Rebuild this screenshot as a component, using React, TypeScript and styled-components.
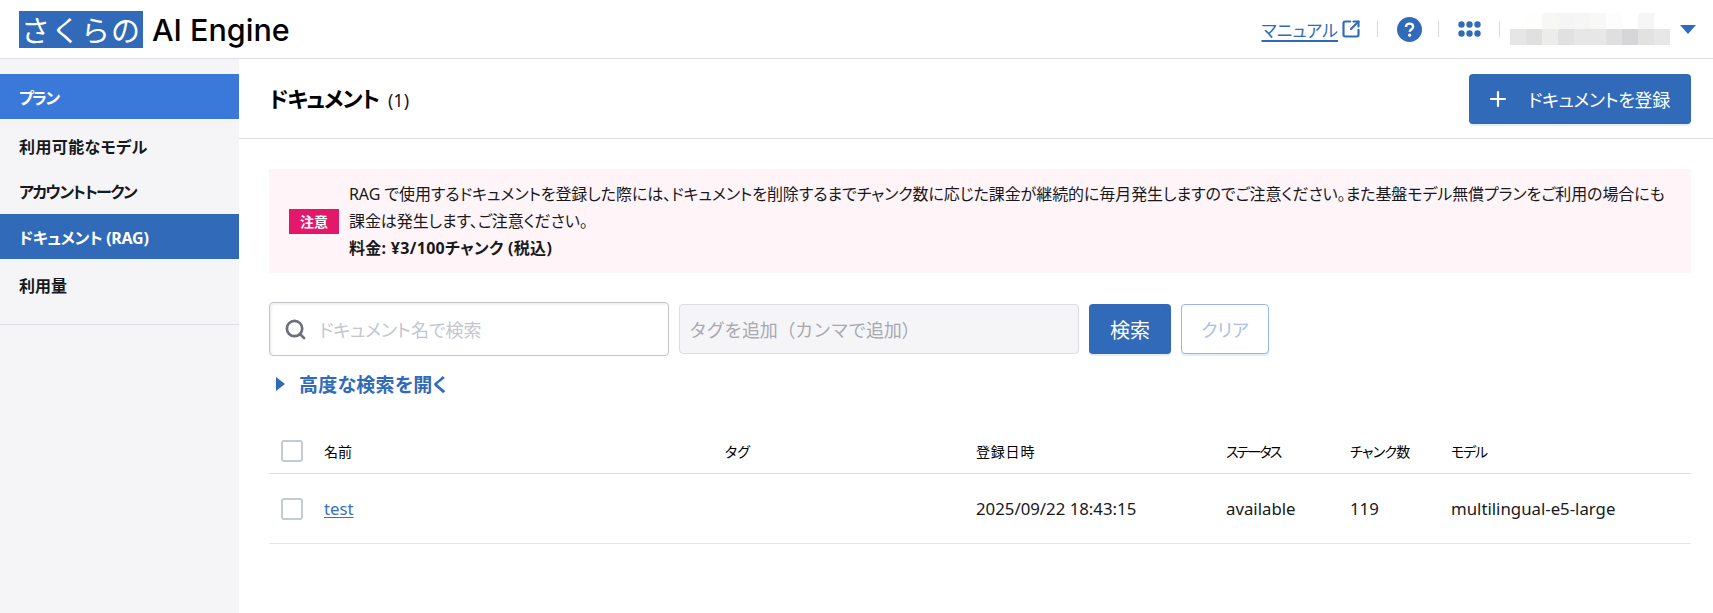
import React from 'react';
import styled, { createGlobalStyle } from 'styled-components';
import { Plus, Search, SquareArrowOutUpRight } from 'lucide-react';

const Global = createGlobalStyle`
  html, body { margin: 0; padding: 0; background: #fff; }
  body {
    font-family: "Noto Sans", "Noto Sans CJK JP", sans-serif;
    font-feature-settings: "palt";
    color: #17191c;
  }
`;

const Page = styled.div`
  width: 1713px;
  height: 613px;
  display: flex;
  flex-direction: column;
  overflow: hidden;
`;

const TopBar = styled.header`
  height: 58px;
  flex: none;
  display: flex;
  align-items: center;
  justify-content: space-between;
  padding: 0 17px 0 19px;
  border-bottom: 1px solid #dfdfe3;
`;

const Logo = styled.div`
  display: flex;
  align-items: center;
  gap: 9px;
`;

const LogoMark = styled.span`
  width: 124px;
  height: 37px;
  display: flex;
  align-items: center;
  justify-content: center;
  background: #316ab9;
  color: #fff;
  font-size: 29px;
  font-weight: 400;
  font-feature-settings: normal;
  letter-spacing: 1px;
  white-space: nowrap;
`;

const LogoText = styled.span`
  font-family: Inter, sans-serif;
  font-size: 30.5px;
  font-weight: 500;
  color: #000;
`;

const TopActions = styled.div`
  display: flex;
  align-items: center;
`;

const ManualLink = styled.a`
  color: #316ab9;
  font-size: 17px;
  text-decoration: underline;
  text-decoration-thickness: 2px;
  text-underline-offset: 3px;
  display: flex;
  align-items: center;
  gap: 3px;
  margin-right: 16px;
  & > svg { color: #316ab9; }
`;

const Divider = styled.span`
  width: 1px;
  height: 16px;
  background: #d9d9de;
`;

const IconSlot = styled.span<{ $w: number; $l: number; $r: number }>`
  width: ${p => p.$w}px;
  margin: 0 ${p => p.$r}px 0 ${p => p.$l}px;
  display: flex;
  align-items: center;
  justify-content: center;
`;

const Blur = styled.div`
  width: 160px;
  height: 32px;
  margin-left: 10px;
  display: grid;
  grid-template-columns: repeat(10, 16px);
  grid-auto-rows: 16px;
`;

const BlurCell = styled.span<{ $c: string }>`
  background: ${p => p.$c};
`;

const Caret = styled.span`
  width: 0;
  height: 0;
  margin: 1px 0 0 10px;
  border-left: 8px solid transparent;
  border-right: 8px solid transparent;
  border-top: 9px solid #316ab9;
`;

const Body = styled.div`
  flex: 1;
  display: flex;
  min-height: 0;
`;

const Side = styled.nav`
  width: 239px;
  flex: none;
  background: #f5f5f8;
  padding-top: 15px;
`;

const SideList = styled.div`
  padding-bottom: 17px;
  border-bottom: 1px solid #dcdce1;
`;

const SideItem = styled.div<{ $bg?: string; $track?: number; $after?: number }>`
  height: 45px;
  margin-bottom: ${p => p.$after || 0}px;
  display: flex;
  align-items: center;
  padding-left: 19px;
  font-size: 16px;
  font-weight: 700;
  letter-spacing: ${p => p.$track || 0}px;
  background: ${p => p.$bg || 'transparent'};
  color: ${p => (p.$bg ? '#fff' : '#17191c')};
`;

const Main = styled.main`
  flex: 1;
  min-width: 0;
`;

const TitleBar = styled.div`
  height: 79px;
  display: flex;
  align-items: center;
  justify-content: space-between;
  padding: 0 22px 0 30px;
  border-bottom: 1px solid #dfdfe3;
`;

const Title = styled.h1`
  margin: 0 0 4px;
  font-size: 22px;
  font-weight: 700;
  letter-spacing: -1.1px;
  color: #000;
  display: flex;
  align-items: baseline;
  gap: 9px;
`;

const Count = styled.span`
  font-size: 18px;
  font-weight: 400;
  letter-spacing: 0;
  color: #17191c;
`;

const Button = styled.button`
  height: 50px;
  border: none;
  border-radius: 4px;
  background: #316ab9;
  color: #fff;
  font: inherit;
  font-feature-settings: inherit;
  font-size: 18px;
  display: flex;
  align-items: center;
  justify-content: center;
  box-shadow: 0 2px 0 #e6edf8;
`;

const AddButton = styled(Button)`
  width: 222px;
  gap: 18px;
  padding: 0 4px 0 0;
  letter-spacing: -0.3px;
`;

const Content = styled.div`
  padding: 30px 22px 0 30px;
`;

const Notice = styled.div`
  height: 104px;
  display: flex;
  align-items: center;
  gap: 10px;
  padding: 0 20px;
  background: #fff4f8;
  box-sizing: border-box;
`;

const NoticeBadge = styled.span`
  flex: none;
  width: 50px;
  height: 25px;
  display: flex;
  align-items: center;
  justify-content: center;
  background: #e3186a;
  color: #fff;
  font-size: 14px;
  font-weight: 700;
`;

const NoticeText = styled.div`
  font-size: 16px;
  line-height: 27px;
  letter-spacing: -0.08px;
  white-space: nowrap;
`;

const NoticeFee = styled.strong`
  display: block;
  font-weight: 700;
  letter-spacing: 0.3px;
`;

const SearchRow = styled.div`
  display: flex;
  align-items: center;
  margin-top: 29px;
  height: 54px;
`;

const SearchBox = styled.div`
  width: 400px;
  height: 54px;
  box-sizing: border-box;
  display: flex;
  align-items: center;
  gap: 12px;
  padding-left: 14px;
  border: 1px solid #c3c3cf;
  border-radius: 4px;
  box-shadow: inset 2px 2px 2px #f2f2f5;
  font-size: 18px;
  color: #c4c6cf;
`;

const TagBox = styled.div`
  width: 400px;
  height: 50px;
  margin-left: 10px;
  box-sizing: border-box;
  display: flex;
  align-items: center;
  padding-left: 9px;
  background: #f5f5f8;
  border: 1px solid #dcdce2;
  border-radius: 4px;
  font-size: 18px;
  font-feature-settings: normal;
  letter-spacing: -0.3px;
  color: #a8a8b0;
`;

const SearchButton = styled(Button)`
  width: 82px;
  margin-left: 10px;
  font-size: 20px;
`;

const ClearButton = styled(Button)`
  width: 88px;
  margin-left: 10px;
  background: #fff;
  color: #a9bfea;
  border: 1px solid #96b5ec;
  box-sizing: border-box;
`;

const Advanced = styled.div`
  display: flex;
  align-items: center;
  gap: 14px;
  margin: 15px 0 0 7px;
  height: 26px;
  color: #316ab9;
  font-size: 19px;
  font-weight: 700;
  letter-spacing: 0.25px;
`;

const Triangle = styled.span`
  width: 0;
  height: 0;
  border-top: 7px solid transparent;
  border-bottom: 7px solid transparent;
  border-left: 9px solid #316ab9;
`;

const cols = '55px 401px 251px 250px 124px 101px 1fr';

const HeadRow = styled.div`
  display: grid;
  grid-template-columns: ${cols};
  align-items: center;
  height: 44px;
  margin-top: 32px;
  border-bottom: 1px solid #dcdce4;
  font-size: 14px;
  color: #000;
`;

const HeadCell = styled.span<{ $track?: number }>`
  letter-spacing: ${p => p.$track || 0}px;
`;

const DataRow = styled.div`
  display: grid;
  grid-template-columns: ${cols};
  align-items: center;
  height: 69px;
  border-bottom: 1px solid #e6e6ea;
  font-size: 16.8px;
  color: #17191c;
`;

const CheckCell = styled.span`
  padding-left: 12px;
  display: flex;
`;

const Check = styled.span`
  width: 22px;
  height: 22px;
  box-sizing: border-box;
  border: 2px solid #c4cbd6;
  border-radius: 3px;
`;

const RowLink = styled.a`
  color: #3a6fc4;
  text-decoration: underline;
  text-underline-offset: 2px;
`;

const blur = [
  '#ffffff','#fefefc','#f7f7f6','#f5f5f5','#f6f6f6','#f8f8f7','#fdfdfd','#ffffff','#f5f6f5','#ffffff',
  '#e6e6e6','#e0e0e0','#ececea','#e1e1e1','#e7e7e7','#e7e7e7','#dfdfdf','#d6d6d9','#e2e2e0','#e6e7e6',
];

export default function App() {
  return (
    <Page>
      <Global />
      <TopBar>
        <Logo>
          <LogoMark>さくらの</LogoMark>
          <LogoText>AI Engine</LogoText>
        </Logo>
        <TopActions>
          <ManualLink>
            マニュアル
            <SquareArrowOutUpRight size={20} strokeWidth={2.6} />
          </ManualLink>
          <Divider />
          <IconSlot $w={25} $l={19} $r={16}>
            <svg width="25" height="25" viewBox="0 0 25 25">
              <circle cx="12.5" cy="12.5" r="12.5" fill="#316ab9" />
              <path d="M9 10c0-2.2 1.6-3.4 3.6-3.4s3.5 1.2 3.5 3.1c0 2.8-3.4 2.7-3.4 5" fill="none" stroke="#fff" strokeWidth="2.4" />
              <circle cx="12.6" cy="18.2" r="1.6" fill="#fff" />
            </svg>
          </IconSlot>
          <Divider />
          <IconSlot $w={23} $l={19} $r={18}>
            <svg width="23" height="16" viewBox="0 0 23 16">
              {[3.5, 11.5, 19.5].map(x =>
                [3.5, 12.5].map(y => <circle key={`${x}-${y}`} cx={x} cy={y} r="3.2" fill="#316ab9" />)
              )}
            </svg>
          </IconSlot>
          <Divider />
          <Blur>
            {blur.map((c, i) => <BlurCell key={i} $c={c} />)}
          </Blur>
          <Caret />
        </TopActions>
      </TopBar>
      <Body>
        <Side>
          <SideList>
            <SideItem $bg="#3a79d9" $track={-1.5} $after={4}>プラン</SideItem>
            <SideItem $track={0.4}>利用可能なモデル</SideItem>
            <SideItem $track={-1.5} $after={1}>アカウントトークン</SideItem>
            <SideItem $bg="#316ab9" $track={-0.25} $after={3}>ドキュメント (RAG)</SideItem>
            <SideItem>利用量</SideItem>
          </SideList>
        </Side>
        <Main>
          <TitleBar>
            <Title>ドキュメント<Count>(1)</Count></Title>
            <AddButton><Plus size={24} strokeWidth={2.2} />ドキュメントを登録</AddButton>
          </TitleBar>
          <Content>
            <Notice>
              <NoticeBadge>注意</NoticeBadge>
              <NoticeText>
                RAG で使用するドキュメントを登録した際には、ドキュメントを削除するまでチャンク数に応じた課金が継続的に毎月発生しますのでご注意ください。また基盤モデル無償プランをご利用の場合にも<br />課金は発生します、ご注意ください。
                <NoticeFee>料金: ¥3/100チャンク (税込)</NoticeFee>
              </NoticeText>
            </Notice>
            <SearchRow>
              <SearchBox>
                <Search size={23} strokeWidth={2.8} color="#6b7079" />
                ドキュメント名で検索
              </SearchBox>
              <TagBox>タグを追加（カンマで追加）</TagBox>
              <SearchButton>検索</SearchButton>
              <ClearButton>クリア</ClearButton>
            </SearchRow>
            <Advanced><Triangle />高度な検索を開く</Advanced>
            <HeadRow>
              <CheckCell><Check /></CheckCell>
              <HeadCell>名前</HeadCell>
              <HeadCell>タグ</HeadCell>
              <HeadCell $track={0.8}>登録日時</HeadCell>
              <HeadCell $track={-1.9}>ステータス</HeadCell>
              <HeadCell $track={-0.7}>チャンク数</HeadCell>
              <HeadCell $track={-1.2}>モデル</HeadCell>
            </HeadRow>
            <DataRow>
              <CheckCell><Check /></CheckCell>
              <span><RowLink>test</RowLink></span>
              <span />
              <span>2025/09/22 18:43:15</span>
              <span>available</span>
              <span>119</span>
              <span>multilingual-e5-large</span>
            </DataRow>
          </Content>
        </Main>
      </Body>
    </Page>
  );
}
